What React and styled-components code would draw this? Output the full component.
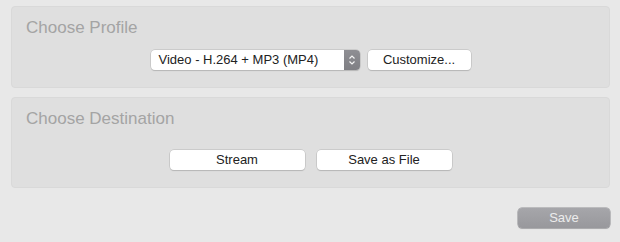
import React, { useState } from "react";
import styled, { createGlobalStyle } from "styled-components";

const GlobalStyle = createGlobalStyle`
  html, body {
    margin: 0;
    padding: 0;
    background: #e8e8e8;
  }
  body {
    font-family: "Liberation Sans", Arial, sans-serif;
  }
`;

export default function App() {
  const [profile] = useState("Video - H.264 + MP3 (MP4)");

  return (
    <Window>
      <GlobalStyle />
      <Panel>
        <Title>Choose Profile</Title>
        <Row $gap={8} $top={12}>
          <Select>
            <span className="label">{profile}</span>
            <span className="stepper">
              <svg width="8" height="12" viewBox="0 0 8 12">
                <path d="M1.5 4.5 L4 2 L6.5 4.5" fill="none" stroke="#f4f4f4" strokeWidth="1.2" />
                <path d="M1.5 7.5 L4 10 L6.5 7.5" fill="none" stroke="#f4f4f4" strokeWidth="1.2" />
              </svg>
            </span>
          </Select>
          <Button $width={103}>Customize...</Button>
        </Row>
      </Panel>
      <Panel>
        <Title>Choose Destination</Title>
        <Row $gap={12} $top={21}>
          <Button $width={135}>Stream</Button>
          <Button $width={135}>Save as File</Button>
        </Row>
      </Panel>
      <Footer>
        <SaveButton>Save</SaveButton>
      </Footer>
    </Window>
  );
}

const Window = styled.div`
  width: 620px;
  height: 242px;
  box-sizing: border-box;
  padding: 6px 10px 0 11px;
  display: flex;
  flex-direction: column;
  gap: 9px;
  background: #e8e8e8;
`;

const Panel = styled.section`
  background: #dfdfdf;
  border: 1px solid #d9d9d9;
  border-radius: 4px;
  padding: 11px 14px 17px;
`;

const Title = styled.h2`
  margin: 0;
  font-size: 17px;
  line-height: 20px;
  font-weight: normal;
  color: #a4a4a4;
`;

const Row = styled.div`
  display: flex;
  justify-content: center;
  gap: ${(p) => p.$gap}px;
  margin-top: ${(p) => p.$top}px;
`;

const Select = styled.div`
  width: 209px;
  height: 20px;
  box-sizing: border-box;
  display: flex;
  background: #fff;
  border-radius: 4px;
  box-shadow: 0 0 0 0.5px #b8b8b8, 0 1px 1px rgba(0, 0, 0, 0.18);
  overflow: hidden;

  .label {
    flex: 1;
    font-size: 13px;
    line-height: 20px;
    color: #222;
    padding-left: 8px;
    white-space: nowrap;
  }

  .stepper {
    width: 16px;
    display: flex;
    align-items: center;
    justify-content: center;
    background: linear-gradient(#8e8e93, #7f7f84);
  }
`;

const Button = styled.button`
  width: ${(p) => p.$width}px;
  height: 20px;
  padding: 0;
  border: none;
  border-radius: 4px;
  background: #fff;
  box-shadow: 0 0 0 0.5px #b8b8b8, 0 1px 1px rgba(0, 0, 0, 0.18);
  font-family: "Liberation Sans", Arial, sans-serif;
  font-size: 13px;
  line-height: 20px;
  color: #222;
`;

const Footer = styled.div`
  display: flex;
  justify-content: flex-end;
  margin-top: 11px;
`;

const SaveButton = styled.button`
  width: 92px;
  height: 20px;
  padding: 0;
  border: none;
  border-radius: 4px;
  background: linear-gradient(#a6a6aa, #98989c);
  box-shadow: 0 0 0 0.5px #8d8d91, 0 1px 1px rgba(0, 0, 0, 0.15);
  font-family: "Liberation Sans", Arial, sans-serif;
  font-size: 13px;
  line-height: 20px;
  color: #ececec;
`;
